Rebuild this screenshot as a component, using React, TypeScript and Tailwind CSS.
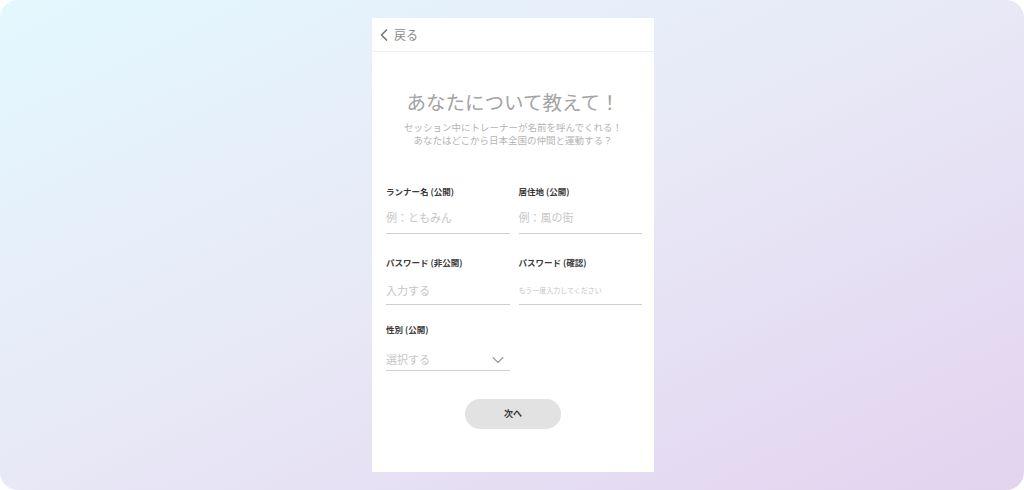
import { ChevronLeft, ChevronDown } from "lucide-react";

function Field({
  label,
  placeholder,
  small,
  pad = "pb-[8px]",
}: {
  label: string;
  placeholder: string;
  small?: boolean;
  pad?: string;
}) {
  return (
    <div className="flex flex-col">
      <div className="text-[8.5px] leading-[12px] font-bold text-[#3a3a3a]">{label}</div>
      <div className={"h-[33px] flex items-end border-b border-[#cfcfcf] mt-[4px] " + pad}>
        <span
          className={
            small
              ? "text-[7px] leading-[16px] text-[#c4c4c4]"
              : "text-[11px] leading-[16px] text-[#c6c6c6]"
          }
        >
          {placeholder}
        </span>
      </div>
    </div>
  );
}

export default function App() {
  return (
    <div
      className="w-[1024px] h-[490px] rounded-[18px] bg-gradient-to-br from-[#e3f8fe] via-[#e8e8f6] to-[#e2d3ef] flex justify-center pt-[18px]"
      style={{ fontFamily: '"Noto Sans CJK JP", "Noto Sans", sans-serif' }}
    >
      <div className="w-[282px] h-[454px] bg-white flex flex-col ml-[2px]">
        <div className="h-[34px] border-b border-[#eef1f3] flex items-center pl-[2px] text-[#7a7a7a]">
          <ChevronLeft size={20} strokeWidth={2} className="text-[#777]" />
          <span className="text-[12px] text-[#8a8a8a]">戻る</span>
        </div>

        <div className="pt-[37px] flex flex-col items-center">
          <h1 className="text-[19.5px] leading-[25px] font-normal text-[#a3a3a3]">あなたについて教えて！</h1>
          <p className="mt-[7px] text-[9.5px] leading-[13px] text-[#b4b4b4] text-center">
            セッション中にトレーナーが名前を呼んでくれる！
            <br />
            あなたはどこから日本全国の仲間と運動する？
          </p>
        </div>

        <div className="mt-[38px] pl-[14px] pr-[12px] grid grid-cols-2 gap-x-[9px] gap-y-[22px]">
          <Field label="ランナー名 (公開)" placeholder="例：ともみん" />
          <Field label="居住地 (公開)" placeholder="例：風の街" />
          <Field label="パスワード (非公開)" placeholder="入力する" pad="pb-[6px]" />
          <Field label="パスワード (確認)" placeholder="もう一度入力してください" small pad="pb-[6px]" />
          <div className="flex flex-col -mt-[4px]">
            <div className="text-[8.5px] leading-[12px] font-bold text-[#3a3a3a]">性別 (公開)</div>
            <div className="h-[32px] flex items-end justify-between border-b border-[#cfcfcf] mt-[4px] pr-[2px] pb-[3px]">
              <span className="text-[11px] leading-[16px] text-[#c6c6c6]">選択する</span>
              <ChevronDown size={20} strokeWidth={1.3} className="text-[#9a9a9a] mb-[-3px]" />
            </div>
          </div>
        </div>

        <div className="flex justify-center mt-[28px]">
          <button className="w-[96px] h-[30px] rounded-full bg-[#e2e2e2] text-[9px] font-bold text-[#333]">次へ</button>
        </div>
      </div>
    </div>
  );
}
